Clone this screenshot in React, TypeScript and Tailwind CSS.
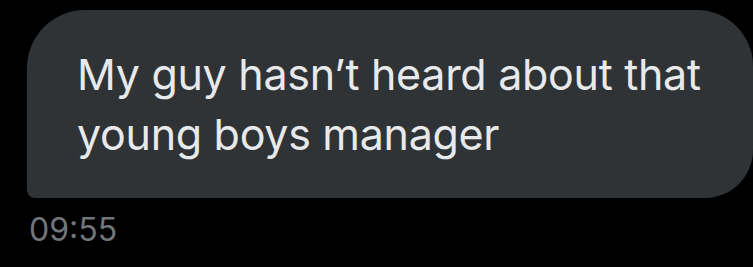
export default function App() {
  return (
    <div className="w-[753px] h-[267px] bg-black overflow-hidden pt-[10px]" style={{ fontFamily: "Inter, 'Noto Sans', sans-serif" }}>
      <div className="ml-[27px] w-[726px] h-[188px] bg-[#2f3336] rounded-tl-[58px] rounded-tr-[56px] rounded-br-[48px] rounded-bl-[8px] pl-[50px] pt-[34px]">
        <p className="text-[43px] leading-[60px] text-[#e7e9ea] tracking-[-0.3px]">
          My guy hasn’t heard about that
          <br />
          young boys manager
        </p>
      </div>
      <div className="ml-[29px] mt-[12px] text-[32px] leading-[40px] text-[#71767b]">09:55</div>
    </div>
  );
}
